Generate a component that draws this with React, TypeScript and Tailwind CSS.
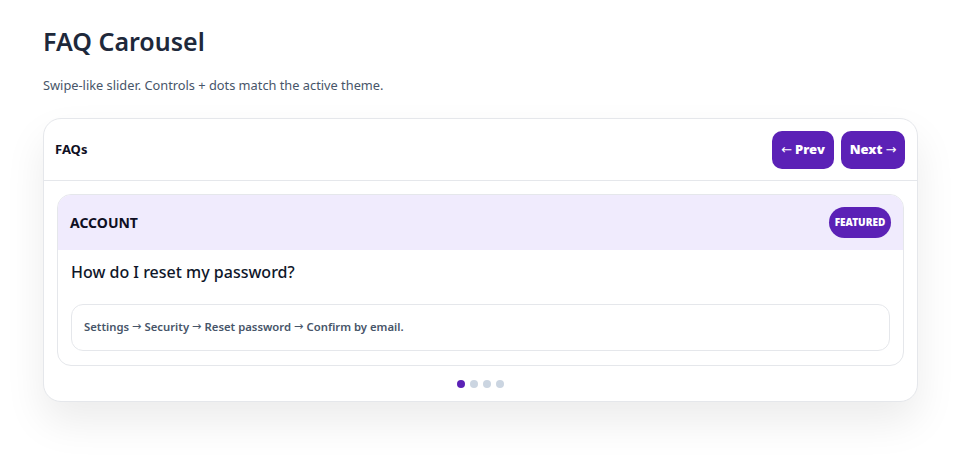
import { useState } from 'react';

const faqs = [
    {
        category: 'ACCOUNT',
        question: 'How do I reset my password?',
        answer: ['Settings', 'Security', 'Reset password', 'Confirm by email.'],
    },
    {
        category: 'BILLING',
        question: 'Can I change my plan later?',
        answer: ['Billing', 'Plans', 'Pick a new tier.'],
    },
    {
        category: 'PRIVACY',
        question: 'Where is my data stored?',
        answer: ['Encrypted storage in the region you selected.'],
    },
    {
        category: 'SUPPORT',
        question: 'How do I contact support?',
        answer: ['Help menu', 'Contact us.'],
    },
];

const Arrow = ({ dir }: { dir: 'left' | 'right' }) => (
    <span style={{ fontFamily: '"DejaVu Sans", sans-serif' }} className="font-normal">
        {dir === 'left' ? '←' : '→'}
    </span>
);

export default function App() {
    const [index, setIndex] = useState(0);
    const item = faqs[index];

    return (
        <div
            className="min-h-screen bg-white px-[43px] pt-[24px] text-[#1e293b]"
            style={{ fontFamily: '"Noto Sans", "Open Sans", sans-serif' }}
        >
            <h1 className="text-[25px] font-semibold leading-[34px] text-[#1e293b]">FAQ Carousel</h1>
            <p className="mt-[18px] text-[12.8px] leading-[18px] text-[#475569]">
                Swipe-like slider. Controls + dots match the active theme.
            </p>

            <div className="mt-[24px] w-[875px] rounded-[18px] border border-[#e5e7eb] bg-white shadow-[0_20px_40px_rgba(0,0,0,0.08)]">
                <div className="flex h-[62px] items-center justify-between border-b border-[#e5e7eb] pl-[11px] pr-[12px]">
                    <span className="text-[13px] font-bold text-[#0f0f23]">FAQs</span>
                    <div className="flex gap-[7px]">
                        <button
                            onClick={() => setIndex((index + faqs.length - 1) % faqs.length)}
                            className="flex h-[38px] w-[62px] items-center justify-center gap-[3px] rounded-[10px] bg-[#5b21b6] text-[13px] font-black text-white"
                        >
                            <Arrow dir="left" /> Prev
                        </button>
                        <button
                            onClick={() => setIndex((index + 1) % faqs.length)}
                            className="flex h-[38px] w-[64px] items-center justify-center gap-[3px] rounded-[10px] bg-[#5b21b6] text-[13px] font-black text-white"
                        >
                            Next <Arrow dir="right" />
                        </button>
                    </div>
                </div>

                <div className="px-[13px] pt-[13px]">
                    <div className="overflow-hidden rounded-[14px] border border-[#e5e7eb]">
                        <div className="flex h-[55px] items-center justify-between bg-[#f0ebfd] pl-[12px] pr-[12px]">
                            <span className="text-[14px] font-bold text-[#0f0f23]">{item.category}</span>
                            <span className="flex h-[31px] w-[62px] items-center justify-center rounded-full bg-[#5b21b6] text-[10px] font-black text-white">
                                FEATURED
                            </span>
                        </div>
                        <div className="px-[13px] pb-[14px]">
                            <h2 className="mt-[10px] text-[16px] font-medium leading-[24px] text-[#0f172a]">
                                {item.question}
                            </h2>
                            <div className="mt-[20px] flex h-[47px] items-center rounded-[12px] border border-[#e5e7eb] px-[12px] text-[11.3px] font-semibold text-[#475569]">
                                {item.answer.map((part, i) => (
                                    <span key={part} className="flex items-center">
                                        {i > 0 && (
                                            <span
                                                style={{ fontFamily: '"DejaVu Sans", sans-serif' }}
                                                className="mx-[3px] font-normal"
                                            >
                                                →
                                            </span>
                                        )}
                                        {part}
                                    </span>
                                ))}
                            </div>
                        </div>
                    </div>
                </div>

                <div className="flex h-[35px] items-center justify-center gap-[5px]">
                    {faqs.map((f, i) => (
                        <button
                            key={f.category}
                            onClick={() => setIndex(i)}
                            className={
                                i === index
                                    ? 'h-[8px] w-[8px] rounded-full bg-[#5b21b6]'
                                    : 'h-[8px] w-[8px] rounded-full bg-[#cbd5e1]'
                            }
                        />
                    ))}
                </div>
            </div>
        </div>
    );
}
